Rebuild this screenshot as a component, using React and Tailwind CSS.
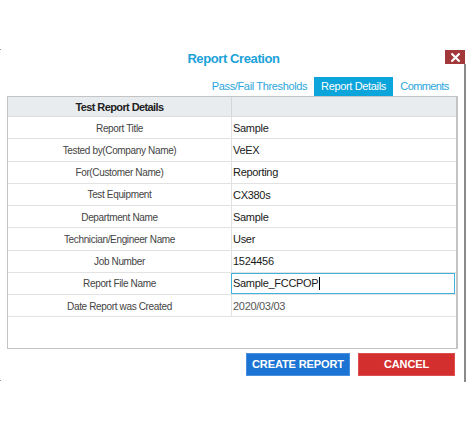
import React from 'react';

const rows = [
  { label: 'Report Title', value: 'Sample' },
  { label: 'Tested by(Company Name)', value: 'VeEX' },
  { label: 'For(Customer Name)', value: 'Reporting' },
  { label: 'Test Equipment', value: 'CX380s' },
  { label: 'Department Name', value: 'Sample' },
  { label: 'Technician/Engineer Name', value: 'User' },
  { label: 'Job Number', value: '1524456' },
  { label: 'Report File Name', value: 'Sample_FCCPOP', editing: true },
  { label: 'Date Report was Created', value: '2020/03/03', muted: true },
];

function CloseButton() {
  return (
    <button className="absolute left-[445px] top-[50px] w-[20px] h-[14px] bg-[#a3383b] flex items-center justify-center">
      <svg width="9" height="9" viewBox="0 0 9 9">
        <path d="M1.2 1.2 L7.8 7.8 M7.8 1.2 L1.2 7.8" stroke="#fff" strokeWidth="2.2" strokeLinecap="square" />
      </svg>
    </button>
  );
}

export default function App() {
  return (
    <div className="relative w-[467px] h-[432px] bg-white pt-[51px] font-['Liberation_Sans',Arial,sans-serif] overflow-hidden">
      {/* stray edge marks + dialog right edge */}
      <div className="absolute left-0 top-[49px] w-[1px] h-[1px] bg-[#9a9a9a]" />
      <div className="absolute left-0 top-[380px] w-[1px] h-[1px] bg-[#9a9a9a]" />
      <div className="absolute left-[464px] top-[64px] w-[2px] h-[318px] bg-[#8a8a8a]" />
      <CloseButton />

      {/* Title */}
      <div className="h-[16px] leading-[16px] text-center text-[13px] font-bold tracking-[-0.4px] text-[#1aa2d9]">
        Report Creation
      </div>

      {/* Tabs */}
      <div className="mt-[10px] ml-[7px] w-[451px] h-[19px] flex justify-end pr-[2px] text-[11px] tracking-[-0.35px]">
        <div className="w-[109px] text-center leading-[19px] text-[#2ba6dc]">Pass/Fail Thresholds</div>
        <div className="w-[79px] text-center leading-[19px] bg-[#0ba4db] text-white">Report Details</div>
        <div className="w-[63px] text-center leading-[19px] text-[#2ba6dc] tracking-[-0.6px]">Comments</div>
      </div>

      {/* Table */}
      <div className="ml-[7px] w-[451px] h-[253px] border border-r-2 border-[#c4c4c4] bg-white">
        <div className="grid grid-cols-[224px_1fr] h-[20px] bg-[#e9ecef] border-b border-[#dcdcdc]">
          <div className="border-r border-[#d6d6d6] flex items-center justify-center pt-[2px] text-[11px] font-bold tracking-[-0.6px] text-[#222]">
            Test Report Details
          </div>
          <div />
        </div>
        {rows.map((r) => (
          <div key={r.label} className="grid grid-cols-[224px_1fr] h-[22.25px] border-b border-[#e2e2e2]">
            <div className="border-r border-[#e2e2e2] flex items-center justify-center pt-[1px] text-[10px] tracking-[-0.35px] text-[#444]">
              {r.label}
            </div>
            {r.editing ? (
              <div className="-ml-[1px] mr-[1px] border border-[#3fb3df] flex items-center pl-[1px] text-[11px] tracking-[-0.3px] text-[#1a1a1a]">
                {r.value}
                <span className="inline-block w-[1px] h-[13px] bg-black ml-[1px]" />
              </div>
            ) : (
              <div
                className={`flex items-center pl-[1px] pt-[1px] text-[11px] tracking-[-0.3px] ${r.muted ? 'text-[#555]' : 'text-[#1a1a1a]'}`}
              >
                {r.value}
              </div>
            )}
          </div>
        ))}
      </div>

      {/* Actions */}
      <div className="mt-[4px] ml-[246px] flex gap-[8px]">
        <button className="w-[104px] h-[23px] bg-[#1b74d3] border border-[#4b90dc] text-white text-[11px] font-bold tracking-[-0.1px]">
          CREATE REPORT
        </button>
        <button className="w-[97px] h-[23px] bg-[#d32f2f] border border-[#dc5050] text-white text-[11px] font-bold tracking-[-0.1px]">
          CANCEL
        </button>
      </div>
    </div>
  );
}
